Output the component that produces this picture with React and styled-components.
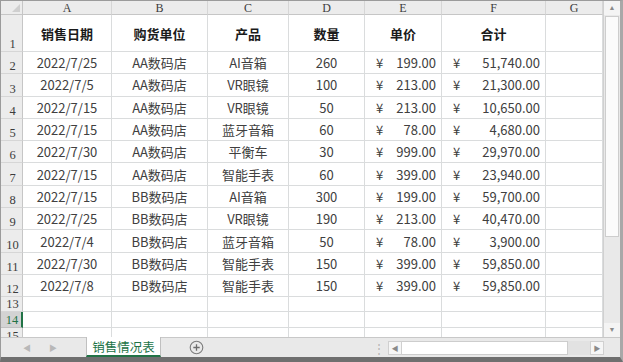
import React from "react";
import styled, { createGlobalStyle } from "styled-components";

const Global = createGlobalStyle`
  html, body { margin: 0; padding: 0; background: #fff; }
  * { box-sizing: border-box; }
`;

const GREEN = "#217346";
const GRID = "#dadcdd";
const HEAD_LINE = "#c6c6c6";
const DATA_FONT = `"Noto Sans CJK SC", "Noto Sans", sans-serif`;
const HEAD_FONT = `"Liberation Serif", "DejaVu Serif", serif`;

const Frame = styled.div`
  width: 623px;
  height: 362px;
  border-top: 1px solid #9b9b9b;
  border-left: 1px solid #9b9b9b;
  border-right: 3px solid #a8a8a8;
  border-bottom: 5px solid #6f6f6f;
  display: flex;
  flex-direction: column;
  overflow: hidden;
  background: #fff;
`;

const Main = styled.div`
  display: flex;
  height: 336px;
  overflow: hidden;
`;

const Sheet = styled.div`
  display: grid;
  grid-template-columns: 22px 89px 96px 81px 76px 77px 104px 57px;
  grid-template-rows: 14px 37px repeat(11, 22.3px) 14.5px 16.5px 16px;
  width: 602px;
  height: 336px;
  overflow: hidden;
  align-content: start;
`;

const Corner = styled.div`
  position: relative;
  background: #ececec;
  border-right: 1px solid ${HEAD_LINE};
  border-bottom: 1px solid ${HEAD_LINE};
  &::after {
    content: "";
    position: absolute;
    right: 2px;
    bottom: 2px;
    border-left: 8px solid transparent;
    border-bottom: 8px solid #cfcfcf;
  }
`;

const ColHead = styled.div`
  background: #ececec;
  border-right: 1px solid #d6d6d6;
  border-bottom: 1px solid ${HEAD_LINE};
  font-family: ${HEAD_FONT};
  font-size: 12px;
  color: #3c3c3c;
  display: flex;
  align-items: center;
  justify-content: center;
  line-height: 1;
  padding-top: 1px;
`;

const RowHead = styled.div`
  background: ${(p) => (p.$active ? "#d3d3d3" : "#ececec")};
  border-right: ${(p) => (p.$active ? `2px solid ${GREEN}` : `1px solid ${HEAD_LINE}`)};
  border-bottom: 1px solid ${(p) => (p.$active ? "#c0c0c0" : "#d6d6d6")};
  font-family: ${HEAD_FONT};
  font-size: 12.5px;
  color: ${(p) => (p.$active ? GREEN : "#3c3c3c")};
  display: flex;
  align-items: flex-end;
  justify-content: center;
  line-height: 12px;
  padding-bottom: 1px;
  padding-left: 2px;
`;

const Cell = styled.div`
  border-right: 1px solid ${GRID};
  border-bottom: 1px solid ${GRID};
  font-family: ${DATA_FONT};
  font-size: 13px;
  font-weight: ${(p) => (p.$bold ? 700 : 400)};
  color: ${(p) => (p.$bold ? "#1a1a1a" : "#404040")};
  display: flex;
  align-items: center;
  justify-content: ${(p) => (p.$money ? "space-between" : "center")};
  padding: ${(p) => (p.$money ? "0 5px 0 11px" : "0")};
  white-space: nowrap;
  line-height: 1;
  overflow: hidden;
`;

const VScroll = styled.div`
  width: 17px;
  height: 336px;
  background: #e9e9e9;
  border-left: 1px solid #d0d0d0;
  display: flex;
  flex-direction: column;
`;

const ArrowBtn = styled.div`
  height: 14px;
  flex: 0 0 14px;
  display: flex;
  align-items: center;
  justify-content: center;
  background: #f4f4f4;
  color: #8a8a8a;
  font-size: 7px;
  line-height: 1;
`;

const VThumb = styled.div`
  height: 221px;
  margin: 1px 1px 0 1px;
  background: #fbfbfb;
  border: 1px solid #cdcdcd;
`;

const VSpace = styled.div`
  flex: 1;
`;

const TabBar = styled.div`
  height: 20px;
  background: #e9e9e9;
  border-top: 1px solid #c8c8c8;
  display: flex;
  align-items: stretch;
  font-family: ${DATA_FONT};
`;

const NavArrows = styled.div`
  width: 85px;
  display: flex;
  align-items: center;
  gap: 18px;
  padding-left: 22px;
  color: #b8b8b8;
  font-size: 8px;
`;

const Tab = styled.div`
  width: 75px;
  margin-top: -1px;
  background: #fff;
  border-left: 1px solid #c0c0c0;
  border-right: 1px solid #c0c0c0;
  border-bottom: 2px solid ${GREEN};
  color: ${GREEN};
  font-size: 12.5px;
  display: flex;
  align-items: center;
  justify-content: center;
  white-space: nowrap;
`;

const AddBtn = styled.div`
  margin-left: 28px;
  display: flex;
  align-items: center;
`;

const Dots = styled.div`
  margin-left: 170px;
  width: 10px;
  display: flex;
  align-items: center;
  justify-content: center;
  color: #b5b5b5;
  font-size: 12px;
`;

const HScroll = styled.div`
  margin-left: 4px;
  width: 216px;
  display: flex;
  align-items: center;
  padding: 2px 0;
`;

const HBtn = styled.div`
  width: 14px;
  height: 14px;
  display: flex;
  align-items: center;
  justify-content: center;
  background: #f6f6f6;
  border: 1px solid #d0d0d0;
  color: #8a8a8a;
  font-size: 7px;
`;

const HThumb = styled.div`
  width: 166px;
  height: 14px;
  background: #fff;
  border: 1px solid #cdcdcd;
  border-left: none;
`;

const HTrack = styled.div`
  flex: 1;
  height: 14px;
  background: #e2e2e2;
`;

const cols = ["A", "B", "C", "D", "E", "F", "G"];

const rows = [
  ["2022/7/25", "AA数码店", "AI音箱", "260", "199.00", "51,740.00"],
  ["2022/7/5", "AA数码店", "VR眼镜", "100", "213.00", "21,300.00"],
  ["2022/7/15", "AA数码店", "VR眼镜", "50", "213.00", "10,650.00"],
  ["2022/7/15", "AA数码店", "蓝牙音箱", "60", "78.00", "4,680.00"],
  ["2022/7/30", "AA数码店", "平衡车", "30", "999.00", "29,970.00"],
  ["2022/7/15", "AA数码店", "智能手表", "60", "399.00", "23,940.00"],
  ["2022/7/15", "BB数码店", "AI音箱", "300", "199.00", "59,700.00"],
  ["2022/7/25", "BB数码店", "VR眼镜", "190", "213.00", "40,470.00"],
  ["2022/7/4", "BB数码店", "蓝牙音箱", "50", "78.00", "3,900.00"],
  ["2022/7/30", "BB数码店", "智能手表", "150", "399.00", "59,850.00"],
  ["2022/7/8", "BB数码店", "智能手表", "150", "399.00", "59,850.00"],
];

const headers = ["销售日期", "购货单位", "产品", "数量", "单价", "合计", ""];

function Money({ value }) {
  return (
    <Cell $money>
      <span>¥</span>
      <span>{value}</span>
    </Cell>
  );
}

export default function App() {
  return (
    <>
      <Global />
      <Frame>
        <Main>
          <Sheet>
            <Corner />
            {cols.map((c) => (
              <ColHead key={c}>{c}</ColHead>
            ))}
            <RowHead>1</RowHead>
            {headers.map((h, i) => (
              <Cell key={i} $bold>
                {h}
              </Cell>
            ))}
            {rows.map((r, i) => (
              <React.Fragment key={i}>
                <RowHead>{i + 2}</RowHead>
                <Cell>{r[0]}</Cell>
                <Cell>{r[1]}</Cell>
                <Cell>{r[2]}</Cell>
                <Cell>{r[3]}</Cell>
                <Money value={r[4]} />
                <Money value={r[5]} />
                <Cell />
              </React.Fragment>
            ))}
            {[13, 14, 15].map((n) => (
              <React.Fragment key={n}>
                <RowHead $active={n === 14}>{n}</RowHead>
                {cols.map((c) => (
                  <Cell key={c} />
                ))}
              </React.Fragment>
            ))}
          </Sheet>
          <VScroll>
            <ArrowBtn>▲</ArrowBtn>
            <VThumb />
            <VSpace />
            <ArrowBtn>▼</ArrowBtn>
          </VScroll>
        </Main>
        <TabBar>
          <NavArrows>
            <span>◀</span>
            <span>▶</span>
          </NavArrows>
          <Tab>销售情况表</Tab>
          <AddBtn>
            <svg width="15" height="15" viewBox="0 0 15 15">
              <circle cx="7.5" cy="7.5" r="6.3" fill="none" stroke="#7c7c7c" strokeWidth="1.1" />
              <path d="M7.5 4.3v6.4M4.3 7.5h6.4" stroke="#6c6c6c" strokeWidth="1.3" />
            </svg>
          </AddBtn>
          <Dots>⋮</Dots>
          <HScroll>
            <HBtn>◀</HBtn>
            <HThumb />
            <HTrack />
            <HBtn>▶</HBtn>
          </HScroll>
        </TabBar>
      </Frame>
    </>
  );
}
